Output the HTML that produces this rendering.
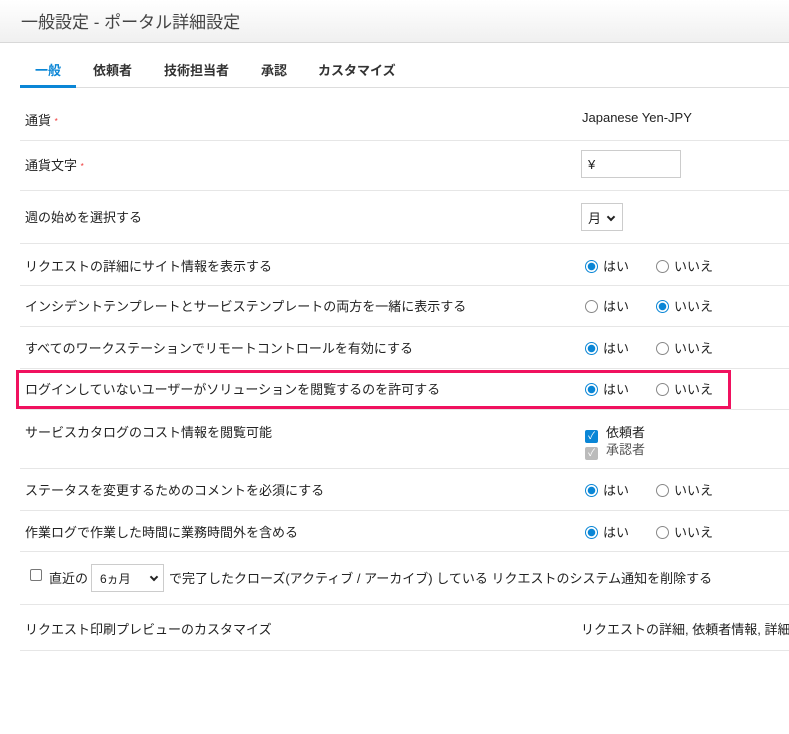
<!DOCTYPE html>
<html><head><meta charset="utf-8"><style>
*{margin:0;padding:0;box-sizing:border-box}
body{width:789px;height:734px;background:#fff;font-family:"Liberation Sans","Noto Sans CJK JP",sans-serif;font-size:13px;color:#222;position:relative;overflow:hidden}
.hdr{position:absolute;left:0;top:0;width:789px;height:43px;background:linear-gradient(#fff,#f0f0f0);border-bottom:1px solid #d8d8d8}
.hdr span{position:absolute;left:21px;top:8px;font-size:17px;color:#444}
.tabs{position:absolute;left:20px;top:87px;width:769px;border-top:1px solid #ddd}
.tab{position:absolute;top:60px;font-size:13px;font-weight:bold;color:#333}
.ul{position:absolute;left:20px;top:85px;width:56px;height:3px;background:#0a86d6}
.line{position:absolute;left:20px;width:769px;border-top:1px solid #e6e6e6}
.t{position:absolute;white-space:nowrap}
.req{color:#e33;font-size:8px;vertical-align:middle}
.r{display:inline-block;width:13px;height:13px;border-radius:50%;border:1px solid #888;vertical-align:-2px;margin-right:5px;background:#fff}
.r.on{border:1.5px solid #0a86d6;background:radial-gradient(#0a86d6 3.5px,#fff 4px)}
.box{position:absolute;left:16px;top:370px;width:715px;height:39px;border:3px solid #f0115f}
.inp{position:absolute;border:1px solid #ccc;background:#fff}
.ar{display:inline-block;width:6px;height:6px;border-right:2px solid #222;border-bottom:2px solid #222;transform:rotate(45deg);vertical-align:3px}
</style></head><body>
<div class="hdr"><span>一般設定 - ポータル詳細設定</span></div>
<div class="tab" style="left:35px;color:#0a86d6">一般</div>
<div class="tab" style="left:93px">依頼者</div>
<div class="tab" style="left:164px">技術担当者</div>
<div class="tab" style="left:261px">承認</div>
<div class="tab" style="left:318px">カスタマイズ</div>
<div class="tabs"></div><div class="ul"></div>

<div class="t" style="left:25px;top:110px">通貨 <span class="req">*</span></div>
<div class="t" style="left:582px;top:110px">Japanese Yen-JPY</div>
<div class="line" style="top:140px"></div>
<div class="t" style="left:25px;top:155px">通貨文字 <span class="req">*</span></div>
<div class="inp" style="left:581px;top:150px;width:100px;height:28px"></div>
<div class="t" style="left:588px;top:157px">¥</div>
<div class="line" style="top:190px"></div>
<div class="t" style="left:25px;top:207px">週の始めを選択する</div>
<div class="inp" style="left:581px;top:203px;width:42px;height:28px"></div>
<div class="t" style="left:588px;top:208px">月 &nbsp;<span class="ar"></span></div>
<div class="line" style="top:243px"></div>
<div class="t" style="left:25px;top:256px">リクエストの詳細にサイト情報を表示する</div>
<div class="t" style="left:585px;top:256px"><span class="r on"></span>はい</div>
<div class="t" style="left:656px;top:256px"><span class="r"></span>いいえ</div>
<div class="line" style="top:285px"></div>
<div class="t" style="left:25px;top:296px">インシデントテンプレートとサービステンプレートの両方を一緒に表示する</div>
<div class="t" style="left:585px;top:296px"><span class="r"></span>はい</div>
<div class="t" style="left:656px;top:296px"><span class="r on"></span>いいえ</div>
<div class="line" style="top:326px"></div>
<div class="t" style="left:25px;top:338px">すべてのワークステーションでリモートコントロールを有効にする</div>
<div class="t" style="left:585px;top:338px"><span class="r on"></span>はい</div>
<div class="t" style="left:656px;top:338px"><span class="r"></span>いいえ</div>
<div class="line" style="top:368px"></div>
<div class="t" style="left:25px;top:379px">ログインしていないユーザーがソリューションを閲覧するのを許可する</div>
<div class="t" style="left:585px;top:379px"><span class="r on"></span>はい</div>
<div class="t" style="left:656px;top:379px"><span class="r"></span>いいえ</div>
<div class="line" style="top:409px"></div>
<div class="box"></div>
<div class="t" style="left:25px;top:422px">サービスカタログのコスト情報を閲覧可能</div>
<div class="t" style="left:585px;top:422px"><span style="display:inline-block;width:13px;height:13px;background:#0a86d6;border-radius:2px;color:#fff;font-size:10px;line-height:13px;text-align:center;vertical-align:-2px;margin-right:8px">✓</span>依頼者</div>
<div class="t" style="left:585px;top:439px;color:#555"><span style="display:inline-block;width:13px;height:13px;background:#bbb;border-radius:2px;color:#fff;font-size:10px;line-height:13px;text-align:center;vertical-align:-2px;margin-right:8px">✓</span>承認者</div>
<div class="line" style="top:468px"></div>
<div class="t" style="left:25px;top:480px">ステータスを変更するためのコメントを必須にする</div>
<div class="t" style="left:585px;top:480px"><span class="r on"></span>はい</div>
<div class="t" style="left:656px;top:480px"><span class="r"></span>いいえ</div>
<div class="line" style="top:510px"></div>
<div class="t" style="left:25px;top:522px">作業ログで作業した時間に業務時間外を含める</div>
<div class="t" style="left:585px;top:522px"><span class="r on"></span>はい</div>
<div class="t" style="left:656px;top:522px"><span class="r"></span>いいえ</div>
<div class="line" style="top:551px"></div>
<div style="position:absolute;left:30px;top:569px;width:12px;height:12px;border:1px solid #777;border-radius:2px"></div>
<div class="t" style="left:49px;top:568px">直近の</div>
<div class="inp" style="left:91px;top:564px;width:73px;height:28px"></div>
<div class="t" style="left:100px;top:570px;font-size:12px">6ヵ月 &nbsp;&nbsp;&nbsp;&nbsp;&nbsp;<span class="ar"></span></div>
<div class="t" style="left:169px;top:568px">で完了したクローズ(アクティブ / アーカイブ) している リクエストのシステム通知を削除する</div>
<div class="line" style="top:604px"></div>
<div class="t" style="left:25px;top:619px">リクエスト印刷プレビューのカスタマイズ</div>
<div class="t" style="left:581px;top:619px">リクエストの詳細, 依頼者情報, 詳細</div>
<div class="line" style="top:650px"></div>
</body></html>
